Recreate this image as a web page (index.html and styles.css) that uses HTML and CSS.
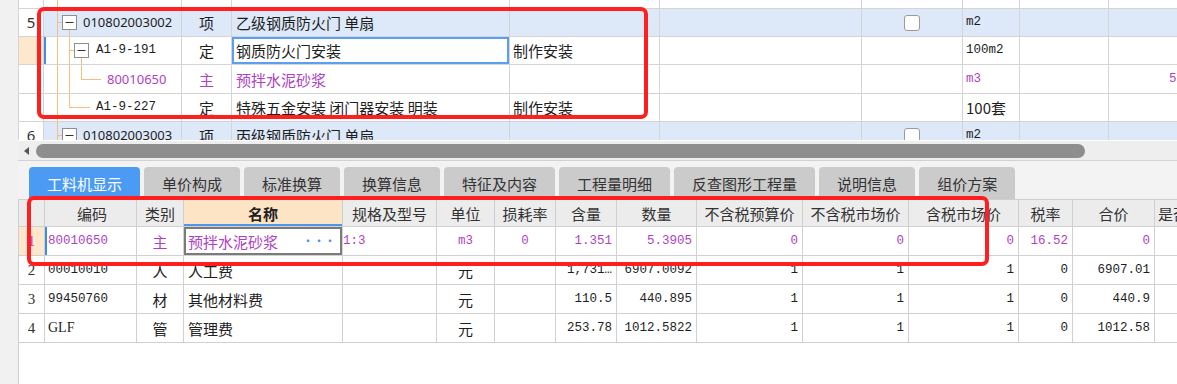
FILE: index.html
```html
<!DOCTYPE html>
<html lang="zh-CN">
<head>
    <meta charset="UTF-8">
    <meta name="viewport" content="width=device-width, initial-scale=1.0">
    <title>分部分项 - 工料机显示</title>
    <link rel="stylesheet" href="styles.css">
</head>
<body>
<div class="screen">

    <!-- 上方清单/定额树 -->
    <div class="top-grid">
        <div class="trow row-cut">
            <div class="cell"></div>
            <div class="cell code">
                <svg class="tree" width="20" height="8"><line x1="13.5" y1="0" x2="13.5" y2="8"/></svg>
            </div>
            <div class="cell"></div><div class="cell"></div><div class="cell"></div><div class="cell"></div>
            <div class="cell"></div><div class="cell"></div><div class="cell"></div><div class="cell"></div>
        </div>

        <div class="trow row-group">
            <div class="cell num">5</div>
            <div class="cell code">
                <svg class="tree" width="39" height="27">
                    <line x1="13.5" y1="0" x2="13.5" y2="27"/>
                    <line x1="13.5" y1="13.5" x2="18" y2="13.5"/>
                    <line x1="25.5" y1="21" x2="25.5" y2="27"/>
                    <rect class="box" x="18.5" y="6.5" width="14" height="14"/>
                    <line class="minus" x1="21.5" y1="13.5" x2="29.5" y2="13.5"/>
                </svg>
                <span class="sans">010802003002</span>
            </div>
            <div class="cell center">项</div>
            <div class="cell name">乙级钢质防火门 单扇</div>
            <div class="cell"></div>
            <div class="cell"></div>
            <div class="cell center"><span class="check"></span></div>
            <div class="cell unit"><span class="mono">m2</span></div>
            <div class="cell"></div>
            <div class="cell"></div>
        </div>

        <div class="trow">
            <div class="cell num picked"></div>
            <div class="cell code bar">
                <svg class="tree" width="52" height="27">
                    <line x1="13.5" y1="0" x2="13.5" y2="27"/>
                    <line x1="25.5" y1="0" x2="25.5" y2="27"/>
                    <line x1="25.5" y1="13.5" x2="30" y2="13.5"/>
                    <line x1="37.5" y1="21" x2="37.5" y2="27"/>
                    <rect class="box" x="30.5" y="6.5" width="14" height="14"/>
                    <line class="minus" x1="33.5" y1="13.5" x2="41.5" y2="13.5"/>
                </svg>
                <span class="mono">A1-9-191</span>
            </div>
            <div class="cell center">定</div>
            <div class="cell name editing">钢质防火门安装</div>
            <div class="cell feat">制作安装</div>
            <div class="cell"></div>
            <div class="cell"></div>
            <div class="cell unit"><span class="mono">100m2</span></div>
            <div class="cell"></div>
            <div class="cell"></div>
        </div>

        <div class="trow tall main">
            <div class="cell num"></div>
            <div class="cell code">
                <svg class="tree" width="63" height="28">
                    <line x1="13.5" y1="0" x2="13.5" y2="28"/>
                    <line x1="25.5" y1="0" x2="25.5" y2="28"/>
                    <line x1="37.5" y1="0" x2="37.5" y2="14.5"/>
                    <line x1="37.5" y1="14.5" x2="57" y2="14.5"/>
                </svg>
                <span class="sans">80010650</span>
            </div>
            <div class="cell center">主</div>
            <div class="cell name">预拌水泥砂浆</div>
            <div class="cell"></div>
            <div class="cell"></div>
            <div class="cell"></div>
            <div class="cell unit"><span class="mono">m3</span></div>
            <div class="cell"></div>
            <div class="cell right"><span class="mono">5.3905</span></div>
        </div>

        <div class="trow">
            <div class="cell num"></div>
            <div class="cell code">
                <svg class="tree" width="52" height="27">
                    <line x1="13.5" y1="0" x2="13.5" y2="27"/>
                    <line x1="25.5" y1="0" x2="25.5" y2="13.5"/>
                    <line x1="25.5" y1="13.5" x2="46" y2="13.5"/>
                </svg>
                <span class="mono">A1-9-227</span>
            </div>
            <div class="cell center">定</div>
            <div class="cell name">特殊五金安装 闭门器安装 明装</div>
            <div class="cell feat">制作安装</div>
            <div class="cell"></div>
            <div class="cell"></div>
            <div class="cell unit">100套</div>
            <div class="cell"></div>
            <div class="cell"></div>
        </div>

        <div class="trow row-group">
            <div class="cell num">6</div>
            <div class="cell code">
                <svg class="tree" width="39" height="27">
                    <line x1="13.5" y1="0" x2="13.5" y2="27"/>
                    <line x1="13.5" y1="13.5" x2="18" y2="13.5"/>
                    <line x1="25.5" y1="21" x2="25.5" y2="27"/>
                    <rect class="box" x="18.5" y="6.5" width="14" height="14"/>
                    <line class="minus" x1="21.5" y1="13.5" x2="29.5" y2="13.5"/>
                </svg>
                <span class="sans">010802003003</span>
            </div>
            <div class="cell center">项</div>
            <div class="cell name">丙级钢质防火门 单扇</div>
            <div class="cell"></div>
            <div class="cell"></div>
            <div class="cell center"><span class="check"></span></div>
            <div class="cell unit"><span class="mono">m2</span></div>
            <div class="cell"></div>
            <div class="cell"></div>
        </div>
    </div>

    <div class="hscroll">
        <span class="arrow"></span>
        <span class="thumb"></span>
    </div>

    <!-- 下方页签 -->
    <div class="tabs">
        <div class="tab active">工料机显示</div>
        <div class="tab">单价构成</div>
        <div class="tab">标准换算</div>
        <div class="tab">换算信息</div>
        <div class="tab">特征及内容</div>
        <div class="tab">工程量明细</div>
        <div class="tab">反查图形工程量</div>
        <div class="tab">说明信息</div>
        <div class="tab">组价方案</div>
    </div>

    <div class="bottom-pane">
        <div class="brow head">
            <div class="cell"></div>
            <div class="cell center">编码</div>
            <div class="cell center">类别</div>
            <div class="cell center sorted">名称</div>
            <div class="cell center">规格及型号</div>
            <div class="cell center">单位</div>
            <div class="cell center">损耗率</div>
            <div class="cell center">含量</div>
            <div class="cell center">数量</div>
            <div class="cell center">不含税预算价</div>
            <div class="cell center">不含税市场价</div>
            <div class="cell center">含税市场价</div>
            <div class="cell center">税率</div>
            <div class="cell center">合价</div>
            <div class="cell first">是否暂估</div>
        </div>

        <div class="brow main">
            <div class="cell num picked">1</div>
            <div class="cell bar"><span class="mono">80010650</span></div>
            <div class="cell center">主</div>
            <div class="cell name editing-dark">预拌水泥砂浆<span class="more">···</span></div>
            <div class="cell"><span class="mono">1:3</span></div>
            <div class="cell center"><span class="mono">m3</span></div>
            <div class="cell center"><span class="mono">0</span></div>
            <div class="cell right"><span class="mono">1.351</span></div>
            <div class="cell right"><span class="mono">5.3905</span></div>
            <div class="cell right"><span class="mono">0</span></div>
            <div class="cell right"><span class="mono">0</span></div>
            <div class="cell right"><span class="mono">0</span></div>
            <div class="cell right"><span class="mono">16.52</span></div>
            <div class="cell right"><span class="mono">0</span></div>
            <div class="cell"></div>
        </div>

        <div class="brow">
            <div class="cell num">2</div>
            <div class="cell"><span class="mono">00010010</span></div>
            <div class="cell center">人</div>
            <div class="cell name">人工费</div>
            <div class="cell"></div>
            <div class="cell center">元</div>
            <div class="cell"></div>
            <div class="cell right"><span class="mono">1,731…</span></div>
            <div class="cell right"><span class="mono">6907.0092</span></div>
            <div class="cell right"><span class="mono">1</span></div>
            <div class="cell right"><span class="mono">1</span></div>
            <div class="cell right"><span class="mono">1</span></div>
            <div class="cell right"><span class="mono">0</span></div>
            <div class="cell right"><span class="mono">6907.01</span></div>
            <div class="cell"></div>
        </div>

        <div class="brow">
            <div class="cell num">3</div>
            <div class="cell"><span class="mono">99450760</span></div>
            <div class="cell center">材</div>
            <div class="cell name">其他材料费</div>
            <div class="cell"></div>
            <div class="cell center">元</div>
            <div class="cell"></div>
            <div class="cell right"><span class="mono">110.5</span></div>
            <div class="cell right"><span class="mono">440.895</span></div>
            <div class="cell right"><span class="mono">1</span></div>
            <div class="cell right"><span class="mono">1</span></div>
            <div class="cell right"><span class="mono">1</span></div>
            <div class="cell right"><span class="mono">0</span></div>
            <div class="cell right"><span class="mono">440.9</span></div>
            <div class="cell"></div>
        </div>

        <div class="brow">
            <div class="cell num">4</div>
            <div class="cell"><span class="serif">GLF</span></div>
            <div class="cell center">管</div>
            <div class="cell name">管理费</div>
            <div class="cell"></div>
            <div class="cell center">元</div>
            <div class="cell"></div>
            <div class="cell right"><span class="mono">253.78</span></div>
            <div class="cell right"><span class="mono">1012.5822</span></div>
            <div class="cell right"><span class="mono">1</span></div>
            <div class="cell right"><span class="mono">1</span></div>
            <div class="cell right"><span class="mono">1</span></div>
            <div class="cell right"><span class="mono">0</span></div>
            <div class="cell right"><span class="mono">1012.58</span></div>
            <div class="cell"></div>
        </div>
    </div>

    <!-- 红色标注框 -->
    <div class="mark mark-top"></div>
    <div class="mark mark-bottom"></div>
</div>
</body>
</html>
```

FILE: styles.css
```css
* {
    margin: 0;
    padding: 0;
    box-sizing: border-box;
}

body {
    width: 1177px;
    height: 384px;
    overflow: hidden;
    background: #f1f1f1;
    font-family: "Noto Sans CJK SC", "Noto Sans", sans-serif;
    font-size: 15px;
    color: #1e1e1e;
}

.screen {
    position: relative;
    height: 384px;
    display: flex;
    flex-direction: column;
}

.cell {
    display: flex;
    align-items: center;
    border-right: 1px solid #d4d4d4;
    border-bottom: 1px solid #d4d4d4;
    overflow: hidden;
    white-space: nowrap;
    line-height: 1;
}

.center { justify-content: center; }
.right { justify-content: flex-end; padding-right: 4px; }

.mono {
    font-family: "Liberation Mono", monospace;
    font-size: 12.5px;
}

.sans {
    font-family: "Noto Sans", sans-serif;
    font-size: 13px;
}

.serif {
    font-family: "Liberation Serif", serif;
    font-size: 14px;
}

/* 上方树表 */
.top-grid {
    margin-left: 18px;
    height: 140px;
    overflow: hidden;
    background: #fff;
    border-left: 1px solid #d4d4d4;
}

.trow {
    display: grid;
    grid-template-columns: 25px 138px 50px 278px 150px 202px 101px 57px 89px 110px;
    height: 28px;
}

.trow.tall { height: 29px; }
.trow.row-cut { height: 9px; }

.row-group .cell:not(.num) {
    background: #dde8f9;
}

.num {
    justify-content: center;
    font-family: "Noto Sans", sans-serif;
    font-size: 14px;
    color: #333;
}

.trow .num { font-size: 15px; }

.picked { background: #fde8cd; }

.bar { box-shadow: inset 2px 0 0 #3d8fe6; }

.code { align-items: stretch; }

.code span { align-self: center; }

.tree {
    display: block;
    flex-shrink: 0;
}

.tree line {
    stroke: #f5be7e;
    stroke-width: 1;
}

.tree .box {
    fill: #fff;
    stroke: #8e8e8e;
}

.tree .minus {
    stroke: #333;
}

.name { padding-left: 4px; }
.feat { padding-left: 3px; }
.unit { padding-left: 3px; }

.editing { box-shadow: inset 0 0 0 2px #5c9ef0; }

.main .cell { color: #b03fc6; }

.check {
    width: 16px;
    height: 16px;
    border: 1px solid #9b9b9b;
    border-radius: 3px;
    background: #fff;
    margin-top: 1px;
}

/* 横向滚动条 */
.hscroll {
    margin-left: 18px;
    height: 21px;
    background: #eeeeee;
    border-top: 1px solid #fff;
    border-bottom: 1px solid #d2d2d2;
    display: flex;
    align-items: center;
}

.hscroll .arrow {
    width: 0;
    height: 0;
    margin-left: 6px;
    border-top: 4px solid transparent;
    border-bottom: 4px solid transparent;
    border-right: 5px solid #555;
}

.hscroll .thumb {
    margin-left: 7px;
    width: 1049px;
    height: 14px;
    border-radius: 7px;
    background: #8e8e8e;
}

/* 页签 */
.tabs {
    height: 38px;
    margin-left: 18px;
    padding: 6px 0 0 11px;
    display: flex;
    gap: 4px;
    background: #f3f3f3;
}

.tab {
    height: 32px;
    padding: 0 18px;
    display: flex;
    align-items: center;
    background: #cbcbcb;
    border-radius: 4px 4px 0 0;
    color: #333;
    white-space: nowrap;
}

.tab.active {
    background: #4b9bf4;
    color: #fff;
}

/* 工料机明细 */
.bottom-pane {
    flex: 1;
    margin-left: 18px;
    background: #fff;
    border-left: 1px solid #cfcfcf;
}

.brow {
    display: grid;
    grid-template-columns: 26px 92px 47px 159px 94px 58px 61px 61px 80px 106px 106px 110px 54px 82px 100px;
    height: 29px;
}

.brow .cell { border-color: #d0d0d0; }

.brow.head { height: 28px; }

.head .cell {
    background: #ececec;
    color: #333;
    border-top: 1px solid #d0d0d0;
}

.head .sorted {
    background: #fde4c5;
    font-weight: bold;
    color: #222;
    box-shadow: inset 0 -2px 0 #4d96ea;
}

.head .first { padding-left: 3px; }

.brow .cell:nth-child(2) { padding-left: 3px; }

.brow .num {
    font-family: "Liberation Serif", serif;
    font-size: 15px;
}

.editing-dark { box-shadow: inset 0 0 0 2px #7b7b7b; }

.more {
    margin-left: auto;
    padding-right: 7px;
    font-size: 12px;
    letter-spacing: -1px;
}

.main .more { color: #4a90e2; }

/* 标注 */
.mark {
    position: absolute;
    border: 4px solid #ff1f1f;
    border-radius: 7px;
}

.mark-top {
    left: 37px;
    top: 7px;
    width: 611px;
    height: 112px;
}

.mark-bottom {
    left: 27px;
    top: 196px;
    width: 962px;
    height: 70px;
}
```
